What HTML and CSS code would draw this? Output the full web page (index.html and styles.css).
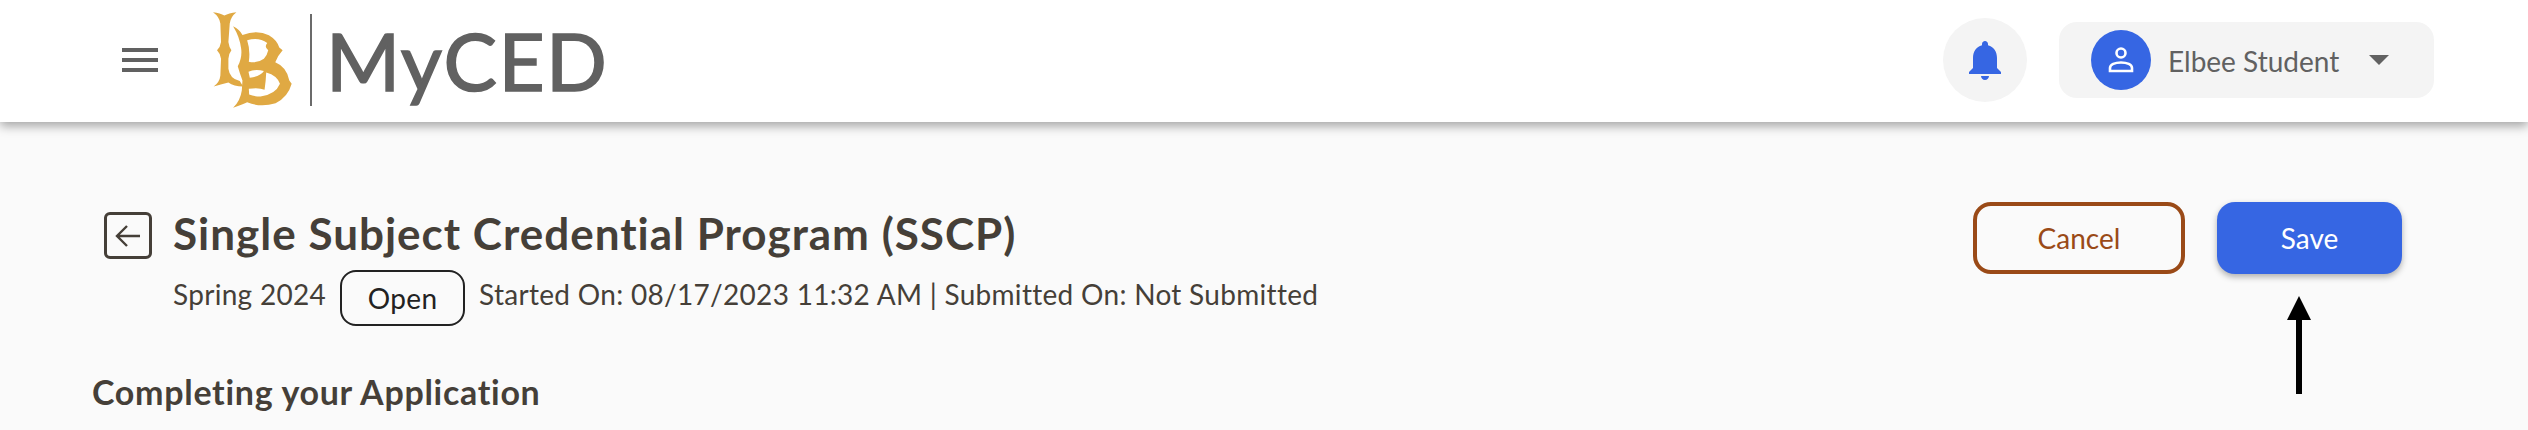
FILE: index.html
```html
<!DOCTYPE html>
<html lang="en">
<head>
    <meta charset="UTF-8">
    <title>MyCED</title>
    <link rel="stylesheet" href="styles.css">
</head>
<body>
    <header class="topbar">
        <svg class="menu-icon" width="36" height="24" viewBox="0 0 36 24"><rect width="36" height="4" fill="#616161"/><rect y="10" width="36" height="4" fill="#616161"/><rect y="20" width="36" height="4" fill="#616161"/></svg>
        <svg class="logo" width="79" height="96" viewBox="38 36 236 286">
            <path fill="#e0a943" d="M38 36 Q60 38 72 46 Q85 38 108 36 Q90 50 88 70 L84 125 Q86 140 93 150 Q85 160 84 175 L84 205 Q88 235 118 242 L128 258 Q100 258 84 246 Q66 250 40 258 Q58 245 60 225 L62 175 Q60 160 50 150 Q60 140 62 125 L60 70 Q58 50 38 36 Z"/>
            <path fill="#e0a943" fill-rule="evenodd" d="M98 78 Q118 88 126 104 Q170 88 205 105 Q230 120 236 142 L246 150 Q232 165 224 186 Q258 200 266 240 L273 250 Q262 290 225 308 Q180 322 140 305 Q130 310 98 322 Q120 300 124 270 L126 240 Q118 220 112 198 Q126 170 122 145 Q118 110 98 78 Z M140 120 Q175 110 200 128 Q190 140 203 150 Q200 165 190 175 Q170 190 145 184 Q150 150 140 120 Z M144 214 Q165 205 190 212 Q180 228 148 232 Z M197 216 Q230 225 238 250 Q225 282 180 288 Q160 288 146 282 L145 265 Q175 260 192 268 Q196 240 197 216 Z"/>
        </svg>
        <div class="divider"></div>
        <div class="brand">MyCED</div>
        <div class="bell">
            <svg width="48" height="48" viewBox="0 0 24 24"><path fill="#3666e3" d="M12 22c1.1 0 2-.9 2-2h-4c0 1.1.89 2 2 2zm6-6v-5c0-3.07-1.64-5.64-4.5-6.32V4c0-.83-.67-1.5-1.5-1.5s-1.5.67-1.5 1.5v.68C7.63 5.36 6 7.92 6 11v5l-2 2v1h16v-1l-2-2z"/></svg>
        </div>
        <div class="user">
            <div class="avatar">
                <svg width="32" height="32" viewBox="0 0 32 32" fill="none" stroke="#fff" stroke-width="2.6"><circle cx="16" cy="9" r="4.5"/><path d="M5 27v-3c0-3.500 5-5.500 11-5.500s11 2 11 5.500v3z"/></svg>
            </div>
            <span class="user-name">Elbee Student</span>
            <span class="caret"></span>
        </div>
    </header>

    <main class="content">
        <div class="page-head">
            <div class="title-block">
                <div class="back-btn">
                    <svg width="28" height="24" viewBox="0 0 28 24" fill="none" stroke="#453f38" stroke-width="2.4"><path d="M26 12H3M13 2 3 12l10 10"/></svg>
                </div>
                <div>
                    <h1 class="title">Single Subject Credential Program (SSCP)</h1>
                    <div class="meta">
                        <span class="meta-text">Spring 2024</span>
                        <span class="badge">Open</span>
                        <span class="meta-text">Started On: 08/17/2023 11:32 AM | Submitted On: Not Submitted</span>
                    </div>
                </div>
            </div>
            <div class="actions">
                <button class="btn btn-cancel">Cancel</button>
                <button class="btn btn-save">Save</button>
            </div>
        </div>
        <h2 class="section-title">Completing your Application</h2>
    </main>

    <svg class="callout" width="30" height="100" viewBox="0 0 30 100"><path fill="#000" d="M15 0 27 24H18V98H12V24H3z"/></svg>
</body>
</html>
```

FILE: styles.css
```css
html, body {
    margin: 0;
    padding: 0;
}
body {
    font-family: Lato, "Open Sans", sans-serif;
    background-color: #fafafa;
    height: 430px;
    overflow: hidden;
    position: relative;
    color: #453f38;
}
.topbar {
    height: 122px;
    box-sizing: border-box;
    padding: 0 94px 2px 122px;
    background-color: #fff;
    box-shadow: 0 4px 10px rgba(0, 0, 0, 0.35);
    display: flex;
    align-items: center;
}
.logo {
    margin-left: 55px;
}
.divider {
    width: 2px;
    height: 92px;
    background-color: #6b6b6b;
    margin-left: 18px;
}
.brand {
    font-size: 80px;
    letter-spacing: 1.5px;
    -webkit-text-stroke: 1.6px #616161;
    color: #616161;
    margin-left: 14px;
}
.bell {
    width: 84px;
    height: 84px;
    margin-left: auto;
    border-radius: 50%;
    background-color: #f4f4f4;
    display: flex;
    align-items: center;
    justify-content: center;
}
.user {
    width: 375px;
    height: 76px;
    box-sizing: border-box;
    margin-left: 32px;
    padding-left: 32px;
    border-radius: 18px;
    background-color: #f4f4f4;
    display: flex;
    align-items: center;
}
.avatar {
    width: 60px;
    height: 60px;
    border-radius: 50%;
    background-color: #3666e3;
    display: flex;
    align-items: center;
    justify-content: center;
}
.user-name {
    font-size: 28px;
    color: #616161;
    margin-left: 17px;
    padding-top: 2px;
}
.caret {
    width: 0;
    height: 0;
    margin-left: 30px;
    border-left: 10px solid transparent;
    border-right: 10px solid transparent;
    border-top: 10px solid #616161;
}
.content {
    padding: 80px 126px 0 92px;
}
.page-head {
    display: flex;
    justify-content: space-between;
    align-items: flex-start;
    padding-left: 12px;
}
.title-block {
    display: flex;
    gap: 21px;
    padding-top: 6px;
}
.back-btn {
    width: 48px;
    height: 47px;
    box-sizing: border-box;
    margin-top: 4px;
    border: 3px solid #453f38;
    border-radius: 6px;
    display: flex;
    align-items: center;
    justify-content: center;
}
.title {
    margin: 0;
    font-size: 44px;
    line-height: 50px;
    font-weight: 700;
    letter-spacing: 1px;
}
.meta {
    display: flex;
    align-items: center;
    gap: 14px;
    margin-top: 12px;
    font-size: 28px;
}
.meta-text {
    letter-spacing: 0.3px;
    margin-bottom: 8px;
}
.badge {
    width: 125px;
    height: 56px;
    box-sizing: border-box;
    border: 2px solid #222;
    border-radius: 16px;
    color: #222;
    letter-spacing: 0.4px;
    display: flex;
    align-items: center;
    justify-content: center;
}
.actions {
    display: flex;
    gap: 32px;
}
.btn {
    height: 72px;
    font-family: inherit;
    font-size: 28px;
    border-radius: 18px;
    cursor: pointer;
}
.btn-cancel {
    width: 212px;
    border: 4px solid #9a4a17;
    background-color: transparent;
    color: #9a4a17;
}
.btn-save {
    width: 185px;
    border: none;
    background-color: #3666e3;
    color: #fff;
    box-shadow: 0 3px 6px rgba(0, 0, 0, 0.3);
}
.section-title {
    margin: 46px 0 0;
    font-size: 34px;
    line-height: 40px;
    font-weight: 700;
    letter-spacing: 0.7px;
}
.callout {
    position: absolute;
    left: 2284px;
    top: 296px;
}
```
